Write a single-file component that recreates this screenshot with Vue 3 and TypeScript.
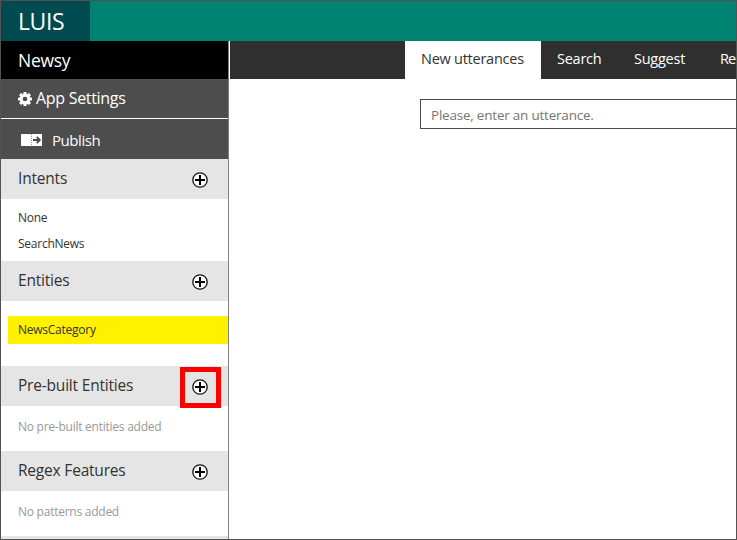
<script setup lang="ts">
interface Section {
  id: string
  title: string
  items: string[]
  empty?: string
  marked?: boolean
}

const sections: Section[] = [
  { id: 'intents', title: 'Intents', items: ['None', 'SearchNews'] },
  { id: 'entities', title: 'Entities', items: ['NewsCategory'] },
  { id: 'prebuilt', title: 'Pre-built Entities', items: [], empty: 'No pre-built entities added', marked: true },
  { id: 'regex', title: 'Regex Features', items: [], empty: 'No patterns added' },
]

const tabs = [
  { id: 'new', label: 'New utterances' },
  { id: 'search', label: 'Search' },
  { id: 'suggest', label: 'Suggest' },
  { id: 'review', label: 'Re' },
]
</script>

<template>
  <div class="window">
    <header class="topbar">
      <div class="brand"><span>LUIS</span></div>
    </header>
    <div class="body">
      <aside class="sidebar">
        <div class="app-name"><span>Newsy</span></div>
        <div class="action settings">
          <svg class="gear" viewBox="0 0 14 14" width="14" height="14">
            <g fill="#fff">
              <rect x="5.4" y="0" width="3.2" height="14" rx=".6" />
              <rect x="5.4" y="0" width="3.2" height="14" rx=".6" transform="rotate(45 7 7)" />
              <rect x="5.4" y="0" width="3.2" height="14" rx=".6" transform="rotate(90 7 7)" />
              <rect x="5.4" y="0" width="3.2" height="14" rx=".6" transform="rotate(135 7 7)" />
              <circle cx="7" cy="7" r="5.3" />
            </g>
            <circle cx="7" cy="7" r="2.3" fill="#4d4d4d" />
          </svg>
          <span>App Settings</span>
        </div>
        <div class="action publish">
          <svg viewBox="0 0 21 12" width="21" height="12">
            <rect width="21" height="12" fill="#fff" />
            <path d="M10.5 0V12" stroke="#999" stroke-dasharray="1 1" />
            <path d="M12 6H19M15.8 3L18.8 6L15.8 9" fill="none" stroke="#4d4d4d" stroke-width="1.8" />
          </svg>
          <span>Publish</span>
        </div>
        <section v-for="s in sections" :key="s.id" :class="['section', s.id]">
          <div class="section-head">
            <span class="title">{{ s.title }}</span>
            <button :class="['add', { marked: s.marked }]" type="button">
              <svg viewBox="0 0 16 16" width="16" height="16">
                <circle cx="8" cy="8" r="7.2" fill="#fff" stroke="#111" stroke-width="1.3" />
                <path d="M8 3V13M3 8H13" stroke="#000" stroke-width="2" />
              </svg>
            </button>
          </div>
          <div class="list">
            <div v-for="item in s.items" :key="item" class="item"><span>{{ item }}</span></div>
            <div v-if="s.empty" class="empty"><span>{{ s.empty }}</span></div>
          </div>
        </section>
        <div class="section-head"></div>
      </aside>
      <main class="content">
        <nav class="tabs">
          <div v-for="(t, i) in tabs" :key="t.id" :class="['tab', t.id, { active: i === 0 }]"><span>{{ t.label }}</span></div>
        </nav>
        <input class="utterance" type="text" placeholder="Please, enter an utterance." />
      </main>
    </div>
  </div>
</template>

<style>
body {
  margin: 0;
  overflow: hidden;
}
</style>

<style scoped>
.window {
  box-sizing: border-box;
  width: 737px;
  height: 540px;
  border: 1px solid #525252;
  background: #fff;
  overflow: hidden;
  display: flex;
  flex-direction: column;
  font-family: "Open Sans", "Noto Sans", sans-serif;
  color: #333;
  white-space: nowrap;
}
.topbar {
  height: 40px;
  flex: none;
  background: #008272;
  display: flex;
}
.brand {
  width: 89px;
  background: #004b50;
  color: #fff;
  font-size: 23px;
  line-height: 41px;
  box-sizing: border-box;
  padding-left: 17px;
  letter-spacing: -0.4px;
}
.body {
  display: flex;
  flex: 1;
  min-height: 0;
}
.sidebar {
  width: 227px;
  flex: none;
  border-right: 1px solid #808080;
  overflow: hidden;
}
.app-name {
  height: 38px;
  background: #000;
  color: #fff;
  font-size: 17.5px;
  letter-spacing: -0.3px;
  line-height: 38px;
  padding-left: 17px;
}
.action {
  background: #4d4d4d;
  color: #fff;
  display: flex;
  align-items: center;
}
.settings {
  height: 39px;
  padding-left: 17px;
  gap: 4px;
  border-bottom: 1px solid #fff;
  font-size: 16px;
  letter-spacing: -0.3px;
}
.settings span {
  padding-bottom: 1px;
}
.publish {
  height: 40px;
  padding-left: 20px;
  gap: 10px;
  font-size: 15px;
  letter-spacing: -0.45px;
}
.publish span {
  padding-top: 2px;
}
.publish svg {
  margin-top: 2px;
}
.section-head {
  height: 40px;
  background: #e5e5e5;
  display: flex;
  justify-content: space-between;
  align-items: center;
  padding: 0 7px 0 17px;
}
.title {
  font-size: 15.5px;
  letter-spacing: -0.2px;
  line-height: 38px;
  height: 40px;
}
.add {
  box-sizing: border-box;
  width: 41px;
  height: 41px;
  padding: 0 1px 0 0;
  margin: 2px 0 0;
  border: 5px solid transparent;
  background: transparent;
  display: flex;
  align-items: center;
  justify-content: center;
  flex: none;
}
.add svg {
  flex: none;
}
.marked {
  border-color: #f00;
}
.list {
  box-sizing: border-box;
  font-size: 12px;
  letter-spacing: -0.25px;
}
.intents .list {
  height: 62px;
  padding-top: 6px;
}
.entities .list {
  height: 65px;
  padding-top: 15px;
}
.item {
  height: 26px;
  line-height: 26px;
  padding-left: 17px;
}
.entities .item {
  height: 28px;
  line-height: 28px;
  margin-left: 7px;
  padding-left: 10px;
  background: #fff100;
}
.empty {
  height: 45px;
  line-height: 42px;
  padding-left: 17px;
  color: #999;
}
.content {
  flex: 1;
  min-width: 0;
  overflow: hidden;
  padding-left: 1px;
}
.tabs {
  height: 38px;
  background: #2f2f2f;
  display: flex;
  padding-left: 175px;
}
.tab {
  flex: none;
  padding: 0 16px;
  line-height: 36px;
  font-size: 14.5px;
  letter-spacing: -0.25px;
  color: #fff;
}
.active {
  box-sizing: border-box;
  width: 136px;
  color: #333;
  background: #fff;
}
.search {
  width: 45px;
}
.suggest {
  width: 54px;
}
.review {
  padding-right: 0;
  letter-spacing: -0.9px;
}
.utterance {
  display: block;
  box-sizing: border-box;
  width: 500px;
  height: 30px;
  margin: 20px 0 0 190px;
  border: 1px solid #4a4a4a;
  padding: 2px 10px 0;
  font-family: inherit;
  font-size: 13.5px;
  letter-spacing: -0.22px;
  background: #fff;
}
.utterance::placeholder {
  color: #767676;
  opacity: 1;
}
</style>
